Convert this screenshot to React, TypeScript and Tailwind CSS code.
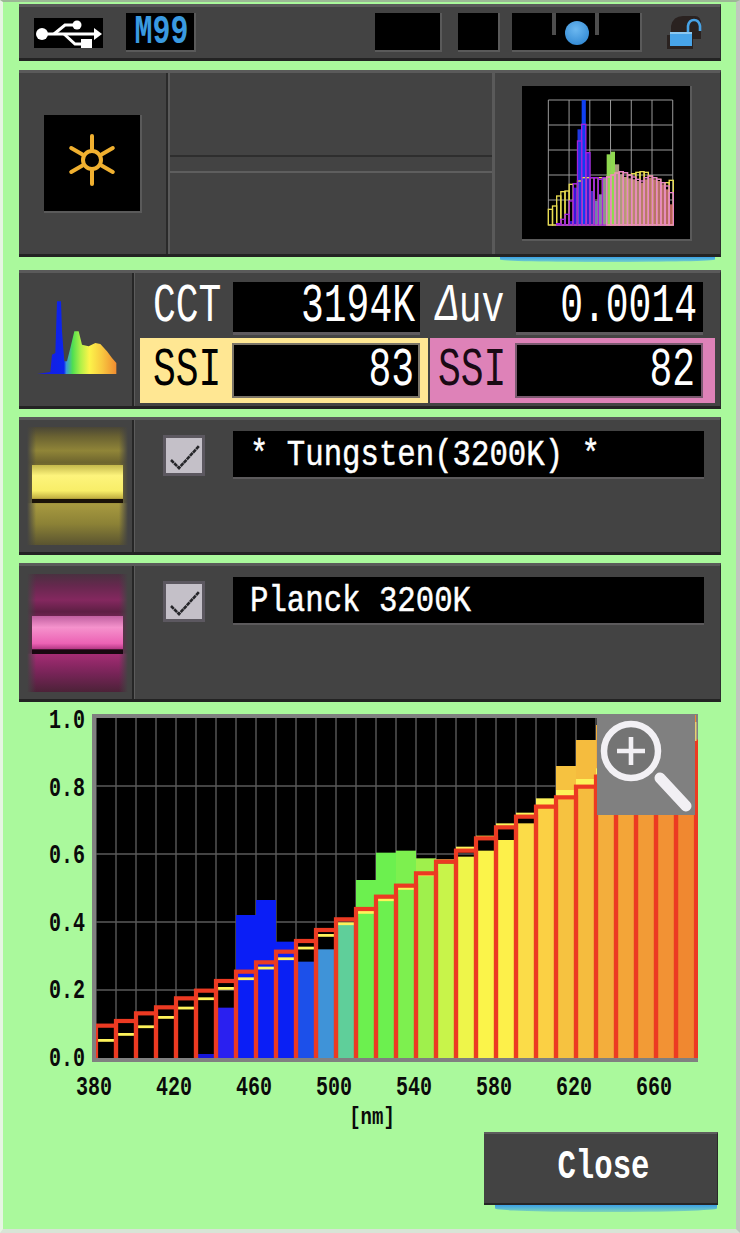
const mono = "[font-family:'Liberation_Mono',monospace]";

const redTops = [962, 948, 925, 907, 880, 857, 828, 800, 772, 740, 708, 675, 643, 612, 575, 542, 505, 470, 437, 400, 367, 335, 305, 277, 245, 215, 185, 155, 125, 110];
const fillTops = [1060, 1060, 1060, 1060, 1060, 1047, 908, 630, 585, 710, 770, 733, 660, 525, 443, 437, 460, 475, 455, 437, 405, 355, 290, 183, 105, 60, 50, 40, 35, 30];
const yellowTops = [1002, 984, 961, 933, 905, 877, 846, 817, 785, 757, 725, 687, 652, 618, 580, 546, 505, 463, 425, 392, 355, 323, 280, 255, 222, 190, 160, 130, 100, 70];
const fillColors = [
  "#000", "#000", "#000", "#000", "#000", "#1616d8", "#2a20f0", "#0a1ef6", "#0a1ef6", "#0a20f4",
  "#1c50ea", "#3f93d8", "#5fcf9a", "#6cf04f", "#6cf04f", "#7df04f", "#9ff04c", "#c8f44a", "#eef54a", "#fbf44a",
  "#fdf04a", "#fbdc48", "#fbd044", "#f6c240", "#f5bc3e", "#f3ae3c", "#f3a538", "#f29b36", "#f29234", "#f08830",
];

// mini chart, coordinates are zoomed reference pixels
const miniYellow = [625, 615, 585, 572, 570, 550, 548, 540, 530, 530, 530, 530, 530, 530, 528, 522, 516, 512, 515, 522, 518, 514, 512, 514, 525, 530, 535, 545, 545, 538];
const miniPink = [672, 672, 668, 655, 640, 600, 548, 420, 370, 455, 530, 530, 535, 530, 528, 522, 516, 512, 515, 522, 528, 535, 540, 530, 525, 530, 535, 545, 555, 575];
const miniFill = [672, 672, 672, 672, 672, 660, 560, 385, 297, 455, 570, 600, 580, 530, 460, 452, 490, 520, 528, 532, 535, 540, 545, 535, 530, 535, 540, 550, 565, 610];
const miniColors = [
  "#000", "#000", "#000", "#000", "#2a10c0", "#3312d0", "#3a18d8", "#2038e0", "#1040f0", "#3a20d0",
  "#4030c0", "#6c85a8", "#7a90a0", "#8a9a88", "#8fd850", "#8fd850", "#a89a80", "#b09880", "#b89878", "#b08c70",
  "#b88870", "#b08470", "#b88068", "#b87c68", "#b87868", "#b87468", "#b87068", "#b86c68", "#b86860", "#b86058",
];

function BigText({ children, className = "" }: { children: React.ReactNode; className?: string }) {
  return <span className={`block scale-y-[1.4] text-[38px] leading-none ${className}`}>{children}</span>;
}

function LineText({ children }: { children: React.ReactNode }) {
  return (
    <span className="block scale-y-[1.2] whitespace-pre pt-[3px] text-[30.7px] leading-none text-white [-webkit-text-stroke:0.4px_white]">
      {children}
    </span>
  );
}

function UsbIcon() {
  return (
    <svg width="69" height="30" viewBox="34 17 69 30" className="block">
      <circle cx="42" cy="33" r="6" fill="#fff" />
      <path d="M42 33H97" stroke="#fff" strokeWidth="3" />
      <path d="M94 27l8 6-8 6z" fill="#fff" />
      <path d="M54 33l11-9h12M64 33l11 10h8" stroke="#fff" strokeWidth="3" fill="none" />
      <circle cx="77" cy="24" r="4.5" fill="#fff" />
      <rect x="81" y="38" width="11" height="9" fill="#fff" />
    </svg>
  );
}

function LockIcon() {
  return (
    <svg width="38" height="38" viewBox="665 14 38 38" className="block">
      <path d="M667 49V35h4v-9q2-10 12-10h12q6 0 6 8v15h-8v10z" fill="#2a2220" />
      <path d="M688 32v-6q1-6 6-6t6 6v5" stroke="#47a3e6" strokeWidth="2.6" fill="none" />
      <rect x="670" y="32" width="22" height="14" fill="#48a4e8" />
      <rect x="670" y="32" width="22" height="2" fill="#8cc8f0" />
    </svg>
  );
}

function SunIcon() {
  const rays = [0, 60, 120, 180, 240, 300];
  return (
    <svg width="60" height="60" viewBox="-30 -30 60 60" className="block">
      <circle r="9" fill="none" stroke="#f0b030" strokeWidth="4" />
      {rays.map((a) => (
        <line key={a} x1="0" y1="-11" x2="0" y2="-24" stroke="#f0b030" strokeWidth="4" strokeLinecap="round" transform={`rotate(${a})`} />
      ))}
    </svg>
  );
}

function MiniChart() {
  const left = 535;
  const w = 12.5;
  return (
    <svg width="168" height="153" viewBox="1566 255 504 459" className="block bg-black">
      <g transform="translate(1110 0)">
        {[0, 1, 2, 3, 4, 5, 6].map((i) => (
          <line key={i} x1={535 + i * 62.2} y1="297" x2={535 + i * 62.2} y2="672" stroke="#9a9a9a" strokeWidth="3" />
        ))}
        {[0, 1, 2, 3, 4, 5].map((i) => (
          <line key={i} x1="535" y1={297 + i * 75} x2="908" y2={297 + i * 75} stroke="#9a9a9a" strokeWidth="3" />
        ))}
        {miniFill.map((t, i) => (
          <rect key={i} x={left + i * w} y={t} width={w} height={672 - t} fill={miniColors[i]} />
        ))}
        {miniYellow.map((t, i) => (
          <rect key={i} x={left + i * w} y={t} width={w} height={672 - t} fill="none" stroke="#e8dc50" strokeWidth="4" />
        ))}
        {miniPink.map((t, i) => (
          <rect key={i} x={left + i * w} y={t} width={w} height={672 - t} fill="none" stroke={i > 13 ? "#e884c8" : "#a020e0"} strokeWidth="4" />
        ))}
      </g>
    </svg>
  );
}

function SpectrumIcon() {
  return (
    <svg width="88" height="78" viewBox="110 100 264 234" className="block">
      <defs>
        <linearGradient id="spec" x1="110" x2="348" y1="0" y2="0" gradientUnits="userSpaceOnUse">
          <stop offset="0" stopColor="#1c1cd8" />
          <stop offset="0.34" stopColor="#0a24f0" />
          <stop offset="0.37" stopColor="#3a98d8" />
          <stop offset="0.45" stopColor="#50e050" />
          <stop offset="0.55" stopColor="#b0f048" />
          <stop offset="0.66" stopColor="#fcf44a" />
          <stop offset="0.82" stopColor="#f8c840" />
          <stop offset="1" stopColor="#f08c30" />
        </linearGradient>
      </defs>
      <path
        d="M110 328L150 322L155 270L165 265L170 110L182 110L185 200L192 290L200 290L210 250L222 200L235 200L245 240L265 245L285 235L300 238L320 260L335 280L348 295L348 328Z"
        fill="url(#spec)"
      />
    </svg>
  );
}

function Roller({ outer, band, bandTop }: { outer: string; band: string; bandTop: string }) {
  return (
    <div className={`ml-[8px] h-[118px] w-[101px] overflow-hidden ${outer}`}>
      <div className={`mx-[5px] h-[38px] w-[91px] ${bandTop} ${band}`} />
    </div>
  );
}

function Check() {
  return (
    <div className="mt-[4px] h-[41px] w-[42px] border-[3px] border-[#5c5860] bg-[#c4c0c8]">
      <svg width="36" height="35" viewBox="0 0 36 35" className="block">
        <path d="M5 22l8 8L33 8" fill="none" stroke="#26262a" strokeWidth="2.6" strokeDasharray="4 0.6" />
      </svg>
    </div>
  );
}

function SelectRow({ children, roller }: { children: React.ReactNode; roller: React.ReactNode }) {
  return (
    <div className="flex h-full">
      <div className="flex w-[115px] shrink-0 items-center border-r-[2px] border-r-[#262626]">{roller}</div>
      <div className="flex items-start border-l border-l-[#5c5c5c] pl-[28px] pt-[11px]">
        <Check />
        <div className="ml-[28px] flex h-[48px] w-[471px] items-center border-b-2 border-b-[#5c5a5c] bg-black pl-[17px]">
          {children}
        </div>
      </div>
    </div>
  );
}

function Panel({ className = "", children }: { className?: string; children: React.ReactNode }) {
  return (
    <div className={`w-[702px] border-t-[3px] border-t-[#5a5a5a] border-b-[3px] border-b-[#232323] border-r border-r-[#2e2e2e] bg-[#434343] ${className}`}>
      {children}
    </div>
  );
}

function Plot() {
  const y = (z: number) => 705 + z / 3;
  const barX = (i: number) => 96 + i * 20;
  return (
    <svg width="606" height="348" viewBox="92 714 606 348" className="block shrink-0">
      <rect x="92" y="714" width="606" height="348" fill="#808080" />
      <rect x="96" y="718" width="600" height="340" fill="#000" />
      {Array.from({ length: 30 }, (_, i) => (
        <line key={i} x1={barX(i)} y1="718" x2={barX(i)} y2="1058" stroke="#5a5a5a" strokeWidth="1.4" />
      ))}
      {[786, 854, 922, 990].map((g) => (
        <line key={g} x1="96" y1={g} x2="696" y2={g} stroke="#5a5a5a" strokeWidth="1.4" />
      ))}
      {fillTops.map((t, i) => (
        <rect key={i} x={barX(i)} y={y(t)} width="20" height={Math.max(0, 1058 - y(t))} fill={fillColors[i]} />
      ))}
      {yellowTops.map((t, i) => (
        <rect key={i} x={barX(i)} y={y(t)} width="20" height={i >= 22 ? 6 : 2.8} fill="#fdf25a" />
      ))}
      {redTops.map((t, i) => (
        <rect key={i} x={barX(i)} y={y(t)} width="20" height={1064 - y(t)} fill="none" stroke="#ec3a22" strokeWidth="4.2" />
      ))}
      <rect x="92" y="1058" width="606" height="4" fill="#808080" />
      <rect x="92" y="714" width="4" height="348" fill="#808080" />
      <rect x="695" y="722" width="1.5" height="19" fill="#e8d070" />
      <rect x="597" y="714" width="98" height="101" fill="#808080" />
      <circle cx="631" cy="751" r="27" fill="#747474" stroke="#f2f0f4" strokeWidth="6.5" />
      <path d="M631 737v28M617 751h28" stroke="#f2f0f4" strokeWidth="4.6" />
      <line x1="660" y1="778" x2="686" y2="806" stroke="#f2f0f4" strokeWidth="11" strokeLinecap="round" />
    </svg>
  );
}

function AxisLabel({ children }: { children: React.ReactNode }) {
  return <span className="block scale-y-[1.35] text-[20px] font-bold leading-none text-[#0a0a0a]">{children}</span>;
}

export default function App() {
  const yLabels = ["1.0", "0.8", "0.6", "0.4", "0.2", "0.0"];
  const xLabels = [380, 420, 460, 500, 540, 580, 620, 660];

  return (
    <div className={`h-[1233px] w-[740px] overflow-hidden border-l-[3px] border-l-[#e6f5e2] border-r-[4px] border-r-[#c0c6bf] border-t-2 border-t-[#9cb896] border-b-[4px] border-b-[#d8e4d6] bg-[#aaf99c] pl-[16px] pt-[2px] ${mono}`}>
      {/* status bar */}
      <Panel className="flex h-[57px] items-center">
        <div className="ml-[15px] bg-black">
          <UsbIcon />
        </div>
        <div className="ml-[23px] flex h-[39px] w-[70px] items-center justify-center border-b-2 border-r-2 border-[#5a5a5a] bg-black pl-[3px]">
          <span className="block scale-y-[1.35] text-[30px] font-bold leading-none text-[#3a9ae0]">M99</span>
        </div>
        <div className="ml-[179px] h-[39px] w-[67px] border-b-2 border-r-2 border-[#5a5a5a] bg-black" />
        <div className="ml-[16px] h-[39px] w-[42px] border-b-2 border-r-2 border-[#5a5a5a] bg-black" />
        <div className="ml-[12px] flex h-[39px] w-[130px] items-start border-b-2 border-r-2 border-[#5a5a5a] bg-black">
          <div className="ml-[40px] h-[22px] w-[4px] shrink-0 bg-[#4e4e4e]" />
          <div className="ml-[9px] mt-[8px] h-[24px] w-[24px] shrink-0 rounded-full bg-[radial-gradient(circle_at_45%_35%,#6cb8f0,#3a90d8_70%,#2a78c0)]" />
          <div className="ml-[6px] h-[22px] w-[4px] shrink-0 bg-[#4e4e4e]" />
        </div>
        <div className="ml-[23px]">
          <LockIcon />
        </div>
      </Panel>

      {/* mode row */}
      <Panel className="mt-[9px] flex h-[187px]">
        <div className="flex w-[149px] shrink-0 items-center border-r-[2px] border-r-[#2a2a2a] pl-[25px]">
          <div className="flex h-[98px] w-[98px] items-center justify-center border-b-2 border-r-2 border-[#5a5a5a] bg-black pb-[6px]">
            <SunIcon />
          </div>
        </div>
        <div className="flex w-[324px] shrink-0 flex-col border-l-2 border-l-[#5a5a5a]">
          <div className="h-[84px] border-b-2 border-b-[#2e2e2e]" />
          <div className="h-[14px]" />
          <div className="flex-1 border-t-2 border-t-[#5e5e5e]" />
        </div>
        <div className="flex flex-1 items-center border-l-[3px] border-l-[#5a5a5a] pl-[27px]">
          <div className="border-b-2 border-r-2 border-[#5a5a5a]">
            <MiniChart />
          </div>
        </div>
      </Panel>
      <div className="h-[13px] pl-[481px]">
        <div className="h-[5px] w-[215px] rounded-b-[60%] bg-[linear-gradient(to_bottom,#3b9fe6,#76d2c8)]" />
      </div>

      {/* readings */}
      <Panel className="flex h-[139px]">
        <div className="flex w-[115px] shrink-0 items-center border-r-[2px] border-r-[#262626] pb-[5px] pl-[18px]">
          <SpectrumIcon />
        </div>
        <div className="flex flex-col border-l border-l-[#5c5c5c] pl-[5px] pt-[9px]">
          <div className="flex h-[56px] items-start text-white">
            <div className="flex h-[50px] w-[93px] items-center pl-[13px]">
              <BigText>CCT</BigText>
            </div>
            <div className="flex h-[53px] w-[187px] items-center justify-end border-b-[3px] border-b-[#5e5a5e] bg-black pr-[5px]">
              <BigText>3194K</BigText>
            </div>
            <div className="flex h-[50px] w-[96px] items-center pl-[16px]">
              <BigText>
                <span className="italic">Δ</span>uv
              </BigText>
            </div>
            <div className="flex h-[53px] w-[187px] items-center justify-end border-b-[3px] border-b-[#5e5a5e] bg-black pr-[6px]">
              <BigText>0.0014</BigText>
            </div>
          </div>
          <div className="flex h-[65px]">
            <div className="flex w-[288px] items-center bg-[#ffe793] pl-[13px] pr-[8px]">
              <BigText className="w-[79px] text-black">SSI</BigText>
              <div className="flex h-[55px] flex-1 items-center justify-end border-2 border-[#7a7468] bg-black pr-[4px] text-white">
                <BigText>83</BigText>
              </div>
            </div>
            <div className="ml-[2px] flex w-[285px] items-center bg-[#de82b8] pl-[8px] pr-[12px]">
              <BigText className="w-[77px] text-[#1a0a14]">SSI</BigText>
              <div className="flex h-[55px] flex-1 items-center justify-end border-2 border-[#7a5a70] bg-black pr-[6px] text-white">
                <BigText>82</BigText>
              </div>
            </div>
          </div>
        </div>
      </Panel>

      <Panel className="mt-[8px] h-[138px]">
        <SelectRow
          roller={
            <Roller
              outer="bg-[linear-gradient(to_right,#434343,transparent_9%,transparent_91%,#434343),linear-gradient(to_bottom,#4a4636,#6a6232_8%,#908538_20%,#6e652e_30%,#7a7030_34%,#7a7030_64%,#a89a40_65%,#8c8236_82%,#5a5430_100%)]"
              bandTop="mt-[38px]"
              band="bg-[linear-gradient(to_bottom,#c4b84c,#fdf47c_28%,#f8ee68_68%,#c0ae40_88%,#1a1208_90%,#1a1208)]"
            />
          }
        >
          <LineText>* Tungsten(3200K) *</LineText>
        </SelectRow>
      </Panel>

      <Panel className="mt-[8px] h-[139px]">
        <SelectRow
          roller={
            <Roller
              outer="bg-[linear-gradient(to_right,#434343,transparent_9%,transparent_91%,#434343),linear-gradient(to_bottom,#4a3040,#66284e_10%,#84285f_22%,#5e1f44_32%,#6e2450_36%,#6e2450_67%,#a42c74_68%,#782458_84%,#4c2238_100%)]"
              bandTop="mt-[42px]"
              band="bg-[linear-gradient(to_bottom,#c060a0,#f592cc_30%,#ec62b4_72%,#b83a88_86%,#180810_89%,#180810)]"
            />
          }
        >
          <LineText>Planck 3200K</LineText>
        </SelectRow>
      </Panel>

      {/* chart */}
      <div className="mt-[12px] flex">
        <div className="ml-[30px] mt-[-7px] flex h-[362px] w-[43px] shrink-0 flex-col justify-between pt-[4px]">
          {yLabels.map((l) => (
            <AxisLabel key={l}>{l}</AxisLabel>
          ))}
        </div>
        <Plot />
      </div>
      <div className="ml-[35px] mt-[9px] flex">
        {xLabels.map((l) => (
          <div key={l} className="w-[80px] text-center">
            <AxisLabel>{l}</AxisLabel>
          </div>
        ))}
      </div>
      <div className="ml-[329px] mt-[11px] w-[48px] text-center">
        <span className="block scale-y-[1.3] text-[19px] font-bold leading-none text-[#0a0a0a]">[nm]</span>
      </div>

      {/* close */}
      <div className="ml-[465px] mt-[4px] flex h-[73px] w-[234px] items-center justify-center border-t-2 border-t-[#5e5e5e] border-b-2 border-b-[#262626] border-r border-r-[#2a2a2a] bg-[#434343] pl-[6px]">
        <span className="block scale-y-[1.3] text-[30.7px] font-bold leading-none text-white">Close</span>
      </div>
      <div className="ml-[476px] h-[7px] w-[222px] rounded-b-[60%] bg-[linear-gradient(to_bottom,#3b9fe6,#7ed6b8)]" />
    </div>
  );
}
